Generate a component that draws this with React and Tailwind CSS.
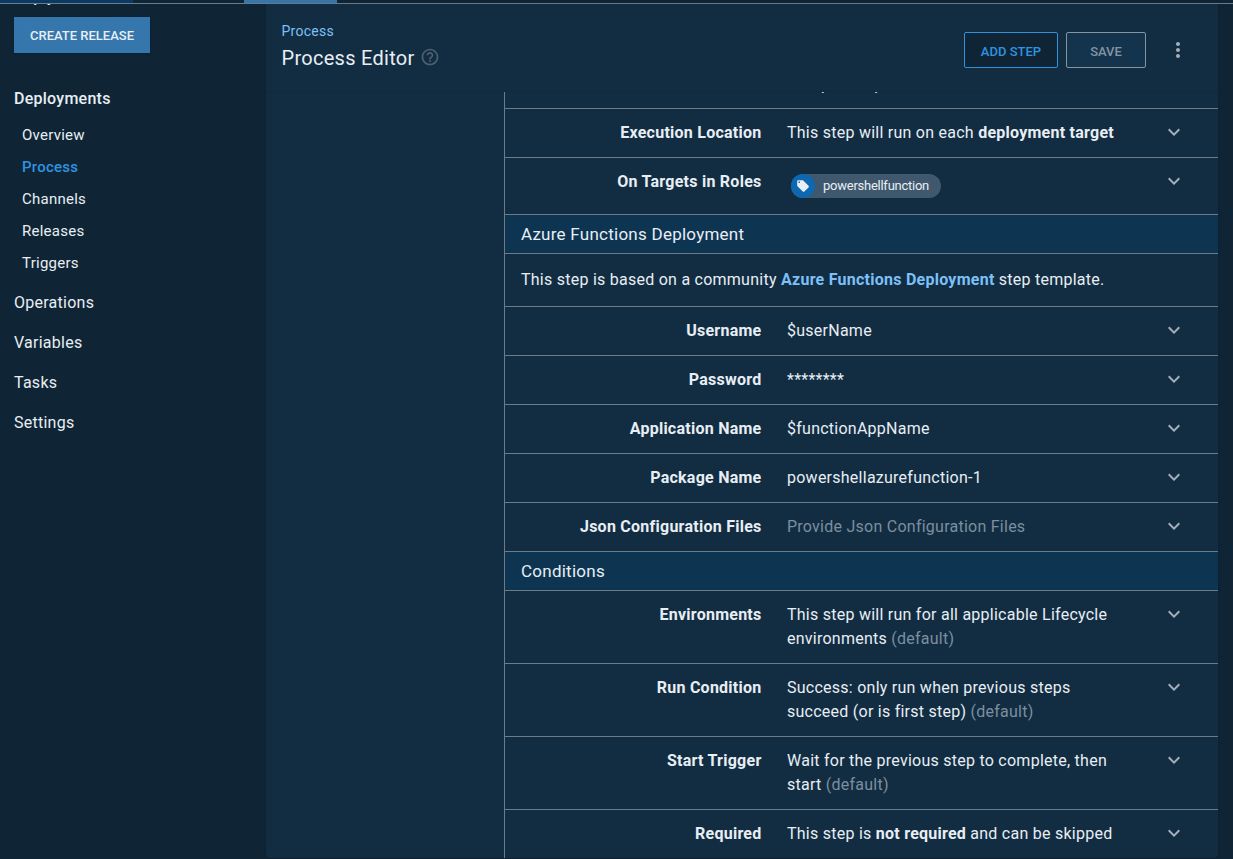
import React from "react";

const Chevron = () => (
  <svg width="24" height="24" viewBox="0 0 24 24" className="-mt-px mr-8 shrink-0 fill-[#a3aeb8]">
    <path d="M7.41 8.59L12 13.17l4.59-4.58L18 10l-6 6-6-6z" />
  </svg>
);

function Row({ label, children, height = "h-[49px]", muted }) {
  return (
    <div className={"flex border-t border-[#6b7c88] pt-3 " + height}>
      <div className="mr-[25.5px] w-[256.5px] shrink-0 text-right font-bold">{label}</div>
      <div className={"min-w-0 flex-1 " + (muted ? "text-[#7c8f9f]" : "")}>
        <div className="w-[338px]">{children}</div>
      </div>
      <Chevron />
    </div>
  );
}

const Section = ({ children }) => (
  <div className="h-[39px] border-t border-[#6b7c88] bg-[#0d3552] pt-[7px] pl-4 text-[17px] leading-6">{children}</div>
);

const Default = () => <span className="text-[#7c8f9f]">(default)</span>;

export default function App() {
  return (
    <div className="flex h-[859px] w-[1233px] flex-col overflow-hidden bg-[#0f2535] font-[Roboto,sans-serif] text-base leading-6 tracking-[0.25px] text-[#e8eef4]">
      <div className="flex h-1 shrink-0 border-b border-[#6b7c88]">
        <div className="w-[133px] bg-[#083a63]" />
        <div className="w-[111px]" />
        <div className="w-[93px] bg-[#3577ad]" />
      </div>
      <div className="flex min-h-0 flex-1">
        <nav className="w-[266px] shrink-0 overflow-hidden pl-[14px]">
          <div className="-mt-[19px] h-8 font-medium">Reply</div>
          <button className="flex h-9 w-[136px] items-center justify-center bg-[#3577ad] pt-px text-[13px] font-medium tracking-normal shadow">
            CREATE RELEASE
          </button>
          <div className="mt-[34px] font-medium">Deployments</div>
          <ul className="mt-2 pl-2 text-[15px] leading-8">
            <li>Overview</li>
            <li className="font-medium text-[#2f93e0]">Process</li>
            <li>Channels</li>
            <li>Releases</li>
            <li>Triggers</li>
          </ul>
          <ul className="mt-1 leading-10">
            <li>Operations</li>
            <li>Variables</li>
            <li>Tasks</li>
            <li>Settings</li>
          </ul>
        </nav>
        <main className="flex h-[854px] w-[952px] shrink-0 flex-col overflow-hidden rounded-b bg-[#122d42] shadow">
          <header className="flex h-[88px] shrink-0 justify-between border-b border-[#10293d] pr-7 pl-[15.5px]">
            <div className="pt-4">
              <div className="text-sm leading-[22px] text-[#7cc0f7]">Process</div>
              <div className="flex items-center gap-[5px]">
                <h1 className="text-xl leading-8 tracking-[0.28px]">Process Editor</h1>
                <svg width="20" height="20" viewBox="0 0 24 24" className="-mt-[3px] fill-[#4c6172]">
                  <path d="M11 18h2v-2h-2v2zm1-16C6.48 2 2 6.48 2 12s4.48 10 10 10 10-4.48 10-10S17.52 2 12 2zm0 18c-4.41 0-8-3.59-8-8s3.59-8 8-8 8 3.59 8 8-3.59 8-8 8zm0-14c-2.21 0-4 1.79-4 4h2c0-1.1.9-2 2-2s2 .9 2 2c0 2-3 1.75-3 5h2c0-2.25 3-2.5 3-5 0-2.21-1.79-4-4-4z" />
                </svg>
              </div>
            </div>
            <div className="flex pt-7 text-[13px] font-medium tracking-normal">
              <button className="mr-2 h-9 w-[94px] rounded-xs border border-[#2f93e0] bg-[#0f2535] pt-[3px] text-[#2f93e0]">ADD STEP</button>
              <button className="mr-5 h-9 w-20 rounded-xs border border-[#8395a3] bg-[#14344e] pt-[3px] text-[#8395a3]">SAVE</button>
              <svg width="24" height="24" viewBox="0 0 24 24" className="mt-1.5 fill-[#a3aeb8]">
                <path d="M12 8c1.1 0 2-.9 2-2s-.9-2-2-2-2 .9-2 2 .9 2 2 2zm0 2c-1.1 0-2 .9-2 2s.9 2 2 2 2-.9 2-2-.9-2-2-2zm0 6c-1.1 0-2 .9-2 2s.9 2 2 2 2-.9 2-2-.9-2-2-2z" />
              </svg>
            </div>
          </header>
          <div className="ml-[238px] flex-1 border-l border-[#6b7c88]">
            <div className="h-4 overflow-hidden">
              <div className="-mt-[19px] flex gap-11 pl-[316px]">
                <span>p</span>
                <span>p</span>
              </div>
            </div>
            <Row label="Execution Location">
              This step will run on each <b>deployment target</b>
            </Row>
            <Row label="On Targets in Roles" height="h-[57px]">
              <div className="mt-1 ml-1 flex h-6 w-[150px] items-center gap-2 rounded-full bg-[#3f586e] text-[13px] tracking-[-0.25px]">
                <span className="flex size-6 items-center justify-center rounded-full bg-[#0d68b1]">
                  <svg width="14" height="14" viewBox="0 0 24 24" className="fill-current">
                    <path d="M21.41 11.58l-9-9C12.05 2.22 11.55 2 11 2H4c-1.1 0-2 .9-2 2v7c0 .55.22 1.05.59 1.42l9 9c.36.36.86.58 1.41.58.55 0 1.05-.22 1.41-.59l7-7c.37-.36.59-.86.59-1.41 0-.55-.23-1.06-.59-1.42zM5.5 7C4.67 7 4 6.33 4 5.5S4.67 4 5.5 4 7 4.67 7 5.5 6.33 7 5.5 7z" />
                  </svg>
                </span>
                powershellfunction
              </div>
            </Row>
            <Section>Azure Functions Deployment</Section>
            <div className="h-[53px] border-t border-[#6b7c88] pt-[14px] pl-4">
              This step is based on a community <b className="text-[#7cc0f7]">Azure Functions Deployment</b> step template.
            </div>
            <Row label="Username">$userName</Row>
            <Row label="Password">********</Row>
            <Row label="Application Name">$functionAppName</Row>
            <Row label="Package Name">powershellazurefunction-1</Row>
            <Row label="Json Configuration Files" muted>Provide Json Configuration Files</Row>
            <Section>Conditions</Section>
            <Row label="Environments" height="h-[73px]">
              This step will run for all applicable Lifecycle environments <Default />
            </Row>
            <Row label="Run Condition" height="h-[73px]">
              Success: only run when previous steps succeed (or is first step) <Default />
            </Row>
            <Row label="Start Trigger" height="h-[73px]">
              Wait for the previous step to complete, then start <Default />
            </Row>
            <Row label="Required">
              This step is <b>not required</b> and can be skipped
            </Row>
          </div>
        </main>
      </div>
    </div>
  );
}
